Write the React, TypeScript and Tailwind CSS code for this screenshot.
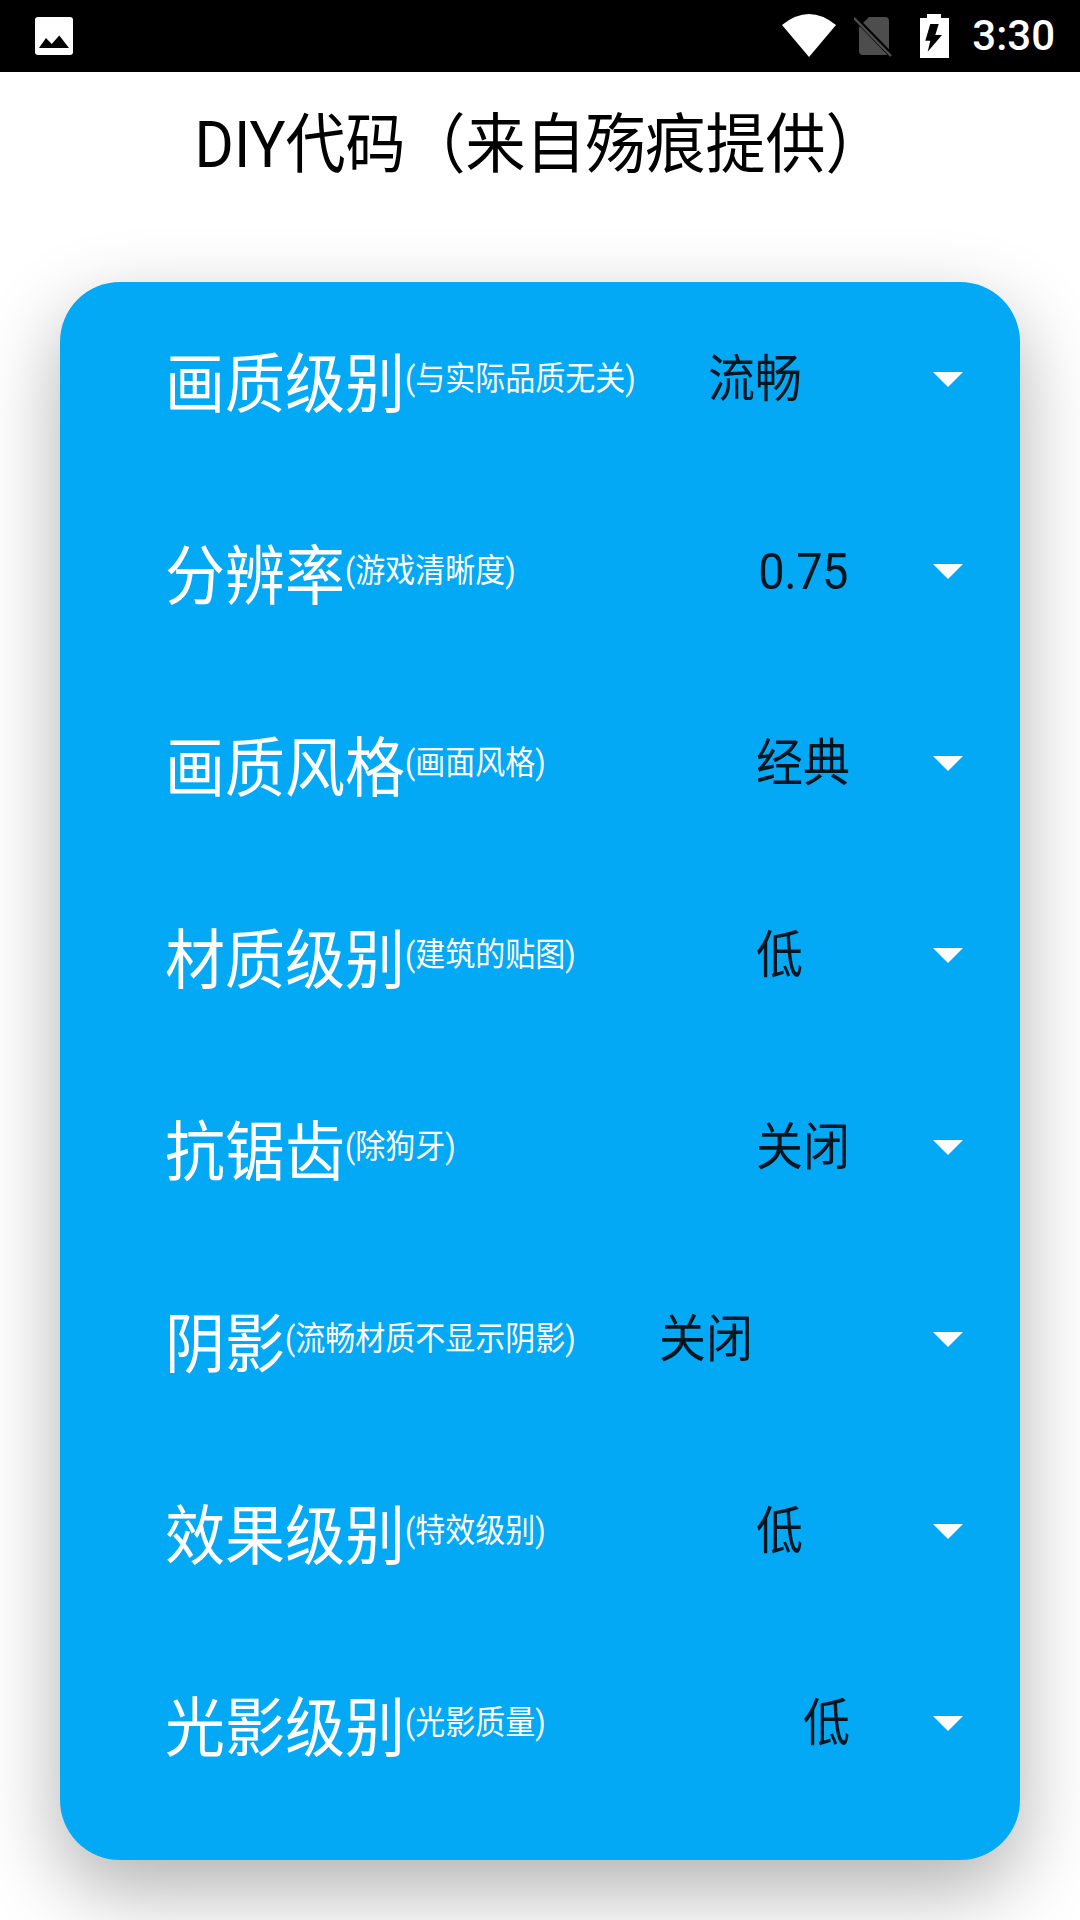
const settings = [
  { label: '画质级别', hint: '(与实际品质无关)', value: '流畅', valueClass: 'mr-[131px]' },
  { label: '分辨率', hint: '(游戏清晰度)', value: '0.75', valueClass: 'mr-[85px] tracking-[-0.5px]' },
  { label: '画质风格', hint: '(画面风格)', value: '经典', valueClass: 'mr-[83px]' },
  { label: '材质级别', hint: '(建筑的贴图)', value: '低', valueClass: 'mr-[130px]' },
  { label: '抗锯齿', hint: '(除狗牙)', value: '关闭', valueClass: 'mr-[83px]' },
  { label: '阴影', hint: '(流畅材质不显示阴影)', value: '关闭', valueClass: 'mr-[180px]' },
  { label: '效果级别', hint: '(特效级别)', value: '低', valueClass: 'mr-[130px]' },
  { label: '光影级别', hint: '(光影质量)', value: '低', valueClass: 'mr-[83px]' },
];

function StatusBar() {
  return (
    <div className="h-[72px] bg-black flex items-center pl-[35px] pr-[25px]">
      <svg width="38" height="38" viewBox="0 0 38 38">
        <rect width="38" height="38" rx="3" fill="#fff" />
        <path d="M4 31 L11 21 L16.7 27 L24.3 18.5 L34 31 Z" fill="#000" />
      </svg>
      <div className="flex-1" />
      <svg width="54" height="44" viewBox="0 0 54 44" className="mr-[18px]">
        <path d="M0 11 Q27 -11 54 11 L27 43 Z" fill="#fff" />
      </svg>
      <svg width="40" height="42" viewBox="0 0 40 42" className="mr-[26px]">
        <path d="M15 2 H31 Q35 2 35 6 V36 Q35 40 31 40 H9 Q5 40 5 36 V12 Z" fill="#4d4d4d" />
        <path d="M1 3 L38 41" stroke="#000" strokeWidth="5" />
        <path d="M0 3 L37 41" stroke="#4d4d4d" strokeWidth="2.5" />
      </svg>
      <svg width="29" height="44" viewBox="0 0 29 44" className="mr-[23px]">
        <path d="M7 0 H21 V4 H29 V44 H0 V4 H7 Z" fill="#fff" />
        <path d="M10.3 10 H18.7 L15.3 21 H22 L7.7 37.7 L10.3 26.7 H5.3 Z" fill="#000" />
      </svg>
      <span className="text-white text-[42px] font-medium leading-none font-['Roboto',sans-serif]">3:30</span>
    </div>
  );
}

function SettingRow({ label, hint, value, valueClass }: (typeof settings)[number]) {
  return (
    <div className="h-[192px] flex items-center pl-[105px] pr-[57px]">
      <span className="text-white text-[60px] leading-none mt-[14px] scale-y-[1.08]">{label}</span>
      <span className="text-white text-[30px] leading-none mt-[2px] scale-y-[1.08]">{hint}</span>
      <div className="flex-1" />
      <span className={`text-black/87 text-[47px] leading-none mt-[2px] scale-y-[1.08] ${valueClass}`}>{value}</span>
      <svg width="30" height="15" viewBox="0 0 30 15" className="mt-[2px]">
        <path d="M0 0 H30 L15 15 Z" fill="#fff" />
      </svg>
    </div>
  );
}

export default function App() {
  return (
    <div className="h-[1920px] bg-white overflow-hidden font-['Roboto','Noto_Sans_CJK_SC',sans-serif]">
      <StatusBar />
      <h1 className="h-[210px] pt-[31px] text-center text-black text-[60px] leading-[84px] font-normal">
        <span className="inline-block scale-y-[1.08]">DIY代码（来自殇痕提供）</span>
      </h1>
      <div className="mx-[60px] h-[1578px] rounded-[60px] bg-[#03a9f5] shadow-[0_30px_80px_rgba(0,0,0,0.31)]">
        {settings.map((row) => (
          <SettingRow key={row.label} {...row} />
        ))}
      </div>
    </div>
  );
}
